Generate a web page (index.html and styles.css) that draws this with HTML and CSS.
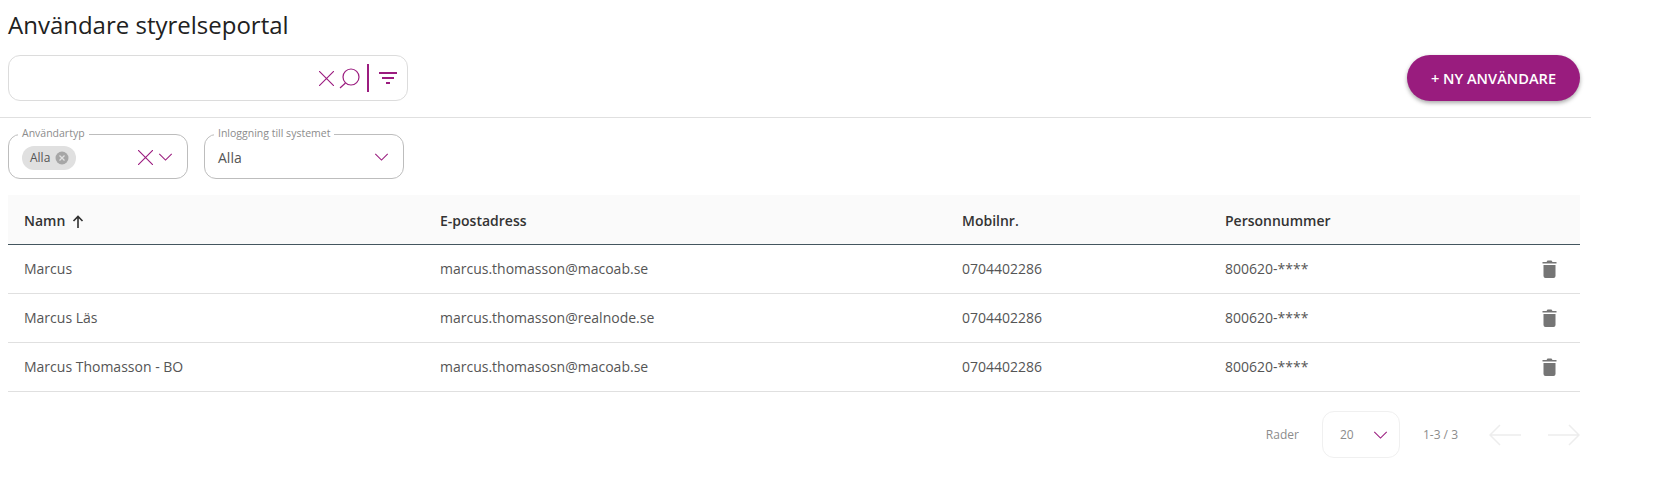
FILE: index.html
```html
<!DOCTYPE html>
<html lang="sv">

<head>
  <meta charset="UTF-8" />
  <title>Användare styrelseportal</title>
  <link rel="stylesheet" href="styles.css">
</head>

<body>
  <div class="page">
    <section class="top">
      <h1>Användare styrelseportal</h1>
      <div class="toolbar">
        <div class="search">
          <svg class="icon-x" viewBox="0 0 16 16"><path d="M0 0l16 16M16 0L0 16" /></svg>
          <svg class="icon-search" viewBox="0 0 21 21"><circle cx="12" cy="9" r="8" /><path d="M6.500 15L1 20" /></svg>
          <span class="sep"></span>
          <svg class="icon-filter" viewBox="0 0 18 12"><path d="M0 1h18M3 6h12M7 11h4" /></svg>
        </div>
        <button class="new-btn">+ NY ANVÄNDARE</button>
      </div>
    </section>

    <section class="filters">
      <fieldset class="field field-type">
        <legend>Användartyp</legend>
        <span class="chip">Alla
          <svg viewBox="0 0 14 14"><circle cx="7" cy="7" r="6.500" /><path d="M4.500 4.500l5 5M9.500 4.500l-5 5" /></svg>
        </span>
        <svg class="icon-x big" viewBox="0 0 16 16"><path d="M0 0l16 16M16 0L0 16" /></svg>
        <svg class="chevron" viewBox="0 0 16 9"><path d="M1 1l7 7 7-7" /></svg>
      </fieldset>
      <fieldset class="field field-login">
        <legend>Inloggning till systemet</legend>
        <span class="value">Alla</span>
        <svg class="chevron" viewBox="0 0 16 9"><path d="M1 1l7 7 7-7" /></svg>
      </fieldset>
    </section>

    <table class="users">
      <thead>
        <tr>
          <th class="col-name">Namn
            <svg class="sort" viewBox="0 0 12 13"><path d="M6 13V2M1.500 6L6 1.500 10.500 6" /></svg>
          </th>
          <th class="col-mail">E-postadress</th>
          <th class="col-phone">Mobilnr.</th>
          <th class="col-pnr">Personnummer</th>
          <th></th>
        </tr>
      </thead>
      <tbody>
        <tr>
          <td>Marcus</td>
          <td>marcus.thomasson@macoab.se</td>
          <td>0704402286</td>
          <td>800620-****</td>
          <td class="cell-del"><svg class="trash" viewBox="0 0 14 18"><path d="M1 5h12v11a2 2 0 0 1-2 2H3a2 2 0 0 1-2-2zM0 2h4l1-1.500h4L10 2h4v1.500H0z" /></svg></td>
        </tr>
        <tr>
          <td>Marcus Läs</td>
          <td>marcus.thomasson@realnode.se</td>
          <td>0704402286</td>
          <td>800620-****</td>
          <td class="cell-del"><svg class="trash" viewBox="0 0 14 18"><path d="M1 5h12v11a2 2 0 0 1-2 2H3a2 2 0 0 1-2-2zM0 2h4l1-1.500h4L10 2h4v1.500H0z" /></svg></td>
        </tr>
        <tr>
          <td>Marcus Thomasson - BO</td>
          <td>marcus.thomasosn@macoab.se</td>
          <td>0704402286</td>
          <td>800620-****</td>
          <td class="cell-del"><svg class="trash" viewBox="0 0 14 18"><path d="M1 5h12v11a2 2 0 0 1-2 2H3a2 2 0 0 1-2-2zM0 2h4l1-1.500h4L10 2h4v1.500H0z" /></svg></td>
        </tr>
      </tbody>
    </table>

    <nav class="pager">
      <span>Rader</span>
      <div class="page-size">
        <span>20</span>
        <svg class="chevron" viewBox="0 0 16 9"><path d="M1 1l7 7 7-7" /></svg>
      </div>
      <span class="range">1-3 / 3</span>
      <svg class="arrow" viewBox="0 0 32 22"><path d="M32 11H1M11 1L1 11l10 10" /></svg>
      <svg class="arrow" viewBox="0 0 32 22"><path d="M0 11h31M21 1l10 10-10 10" /></svg>
    </nav>
  </div>
</body>

</html>
```

FILE: styles.css
```css
* {
  box-sizing: border-box;
}

body {
  margin: 0;
  background-color: #ffffff;
  color: #555555;
  font-family: "Open Sans", "Liberation Sans", sans-serif;
  font-size: 14px;
}

svg {
  fill: none;
  stroke: #9b1c7f;
  stroke-width: 1.2;
  flex: none;
}

.page {
  width: 1591px;
}

.top {
  padding: 8px 11px 0 8px;
  height: 118px;
  border-bottom: 1px solid #e0e0e0;
}

h1 {
  margin: 0;
  height: 34px;
  font-size: 24px;
  font-weight: 400;
  line-height: 34px;
  color: #212121;
}

.toolbar {
  margin-top: 13px;
  display: flex;
  justify-content: space-between;
  align-items: flex-start;
}

.search {
  width: 400px;
  height: 46px;
  padding-right: 10px;
  border: 1px solid #dcdcdc;
  border-radius: 12px;
  display: flex;
  justify-content: flex-end;
  align-items: center;
}

.icon-x {
  width: 15px;
  height: 15px;
}

.icon-search {
  width: 21px;
  height: 21px;
  margin-left: 5px;
}

.sep {
  width: 2px;
  height: 28px;
  margin: 0 10px 0 7px;
  background-color: #9b1c7f;
}

.icon-filter {
  width: 18px;
  height: 12px;
  stroke-width: 2;
}

.new-btn {
  width: 173px;
  height: 46px;
  border: none;
  border-radius: 23px;
  background-color: #991c7e;
  color: #ffffff;
  font-family: "Open Sans", "Liberation Sans", sans-serif;
  font-size: 14.6px;
  font-weight: 600;
  box-shadow: 0 2px 4px rgba(0, 0, 0, 0.35);
}

.filters {
  padding: 9px 0 0 8px;
  display: flex;
  gap: 16px;
}

.field {
  margin: 0;
  height: 52px;
  padding: 0 14px 0 13px;
  border: 1px solid #bdbdbd;
  border-radius: 12px;
  display: flex;
  align-items: center;
}

.field legend {
  padding: 0 4px 2px;
  margin-left: -4px;
  font-size: 10.5px;
  line-height: 12px;
  color: #8c8c8c;
}

.field-type {
  width: 180px;
}

.field-login {
  width: 200px;
}

.chip {
  height: 24px;
  padding: 0 7px 0 8px;
  border-radius: 12px;
  background-color: #e0e0e0;
  font-size: 12px;
  display: flex;
  align-items: center;
  gap: 5px;
  margin-top: -4px;
}

.chip svg {
  width: 14px;
  height: 14px;
  stroke: #e0e0e0;
  stroke-width: 1.3;
}

.chip svg circle {
  fill: #a6a6a6;
  stroke: none;
}

.icon-x.big {
  margin-left: auto;
  margin-top: -4px;
}

.chevron {
  width: 15px;
  height: 8px;
  margin-left: 5px;
  margin-top: -6px;
}

.value {
  flex: 1;
  margin-top: -4px;
}

.users {
  margin: 16px 0 0 8px;
  width: 1572px;
  border-collapse: collapse;
  table-layout: fixed;
}

.users th {
  height: 49px;
  padding: 2px 16px 0;
  background-color: #fafafa;
  border-bottom: 1px solid #44565f;
  text-align: left;
  font-weight: 600;
  color: #333333;
}

.users td {
  height: 49px;
  padding: 0 16px;
  border-bottom: 1px solid #e0e0e0;
}

.col-name {
  width: 416px;
}

.col-mail {
  width: 522px;
}

.col-phone {
  width: 263px;
}

.col-pnr {
  width: 300px;
}

.sort {
  width: 12px;
  height: 13px;
  margin-left: 3px;
  stroke: #303030;
  stroke-width: 1.6;
  vertical-align: -2px;
}

.users .cell-del {
  padding: 0 23px 0 0;
}

.trash {
  display: block;
  width: 15px;
  height: 18px;
  margin-left: auto;
  fill: #757575;
  stroke: none;
}

.pager {
  width: 1580px;
  margin-top: 19px;
  display: flex;
  justify-content: flex-end;
  align-items: center;
  font-size: 12px;
  color: #8c8c8c;
}

.page-size {
  width: 78px;
  height: 47px;
  margin: 0 23px;
  padding: 0 11px 0 17px;
  border: 1px solid #f0f0f0;
  border-radius: 12px;
  display: flex;
  justify-content: space-between;
  align-items: center;
}

.page-size .chevron {
  margin-top: 2px;
}

.range {
  margin-right: 31px;
}

.arrow {
  width: 32px;
  height: 22px;
  margin-top: 2px;
  stroke: #ededed;
  stroke-width: 1.5;
}

.arrow + .arrow {
  margin-left: 27px;
}
```
